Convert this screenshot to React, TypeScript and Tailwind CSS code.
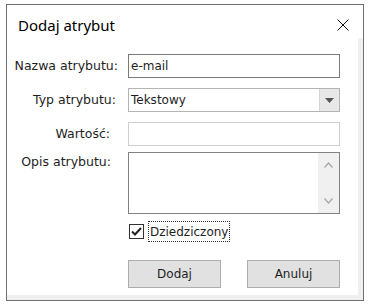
import React from 'react';

const uiFont = { fontFamily: '"DejaVu Sans", Verdana, sans-serif' };

const FormRow = ({ label, pr, children, top = false }: { label: string; pr: string; children: React.ReactNode; top?: boolean }) => (
  <div className={`flex ${top ? 'items-start' : 'items-center'}`}>
    <div className={`w-[111px] shrink-0 text-right text-[12.5px] text-[#1e1e1e] whitespace-nowrap ${pr} ${top ? 'pt-[1px]' : ''}`}>{label}</div>
    <div className="ml-[10px] w-[212px]">{children}</div>
  </div>
);

const Chevron = ({ up }: { up?: boolean }) => (
  <svg width="9" height="6" viewBox="0 0 9 6" className="text-[#a6a6a6]">
    <path d={up ? 'M0.5 5.5 L4.5 1 L8.5 5.5' : 'M0.5 0.5 L4.5 5 L8.5 0.5'} fill="none" stroke="currentColor" strokeWidth="1.2" />
  </svg>
);

export default function App() {
  return (
    <div className="w-[370px] h-[305px] bg-white pl-[6px] pt-[4px]" style={uiFont}>
      <div className="w-[358px] h-[297px] border border-[#6f6f6f] flex flex-col bg-white">
        {/* title bar */}
        <div className="h-[33px] flex items-center justify-between pl-[11px] pr-[14px] shrink-0">
          <span className="text-[15px] text-black mt-[7px]" style={{ fontFamily: '"Noto Sans", "Open Sans", sans-serif' }}>Dodaj atrybut</span>
          <svg width="12" height="12" viewBox="0 0 12 12" className="mt-[7px]">
            <path d="M0.5 0.5 L11.5 11.5 M11.5 0.5 L0.5 11.5" stroke="#111" strokeWidth="1" />
          </svg>
        </div>

        {/* client area */}
        <div className="flex-1 flex flex-col border-r-[5px] border-b-[5px] border-[#f0f0f0]">
          <div className="flex flex-col pt-[16px]">
            <FormRow label="Nazwa atrybutu:" pr="pr-[0px]">
              <div className="h-[24px] border border-[#7a7a7a] px-[2px] flex items-center text-[12px] text-[#1e1e1e]">e-mail</div>
            </FormRow>

            <div className="h-[10px]" />
            <FormRow label="Typ atrybutu:" pr="pr-[2px]">
              <div className="h-[24px] border border-[#b4b4b4] flex">
                <div className="flex-1 px-[2px] flex items-center text-[12px] text-[#1e1e1e]">Tekstowy</div>
                <div className="w-[20px] border-l border-[#d4d4d4] bg-[#e8e8e8] flex items-center justify-center">
                  <svg width="9" height="5" viewBox="0 0 9 5">
                    <path d="M0 0 H9 L4.5 5 Z" fill="#555" />
                  </svg>
                </div>
              </div>
            </FormRow>

            <div className="h-[10px]" />
            <FormRow label="Wartość:" pr="pr-[8px]">
              <div className="h-[24px] border border-[#cfcfcf]" />
            </FormRow>

            <div className="h-[6px]" />
            <FormRow label="Opis atrybutu:" pr="pr-[7px]" top>
              <div className="h-[62px] border border-[#828282] flex">
                <div className="flex-1" />
                <div className="w-[21px] bg-[#f0f0f0] flex flex-col items-center justify-between py-[9px]">
                  <Chevron up />
                  <Chevron />
                </div>
              </div>
            </FormRow>

            {/* checkbox */}
            <div className="flex items-center mt-[7px] ml-[122px]">
              <div className="w-[15px] h-[15px] border border-[#333] bg-white flex items-center justify-center">
                <svg width="11" height="9" viewBox="0 0 11 9">
                  <path d="M1 4.5 L4 7.5 L10 1" fill="none" stroke="#222" strokeWidth="2" />
                </svg>
              </div>
              <div className="ml-[4px] h-[21px] px-[1px] border border-dotted border-[#333] flex items-center text-[12px] text-[#1e1e1e]">
                Dziedziczony
              </div>
            </div>

            {/* buttons */}
            <div className="flex gap-[26px] ml-[121px] mt-[18px]">
              <button className="w-[93px] h-[28px] bg-[#e1e1e1] border border-[#adadad] text-[12px] text-[#1e1e1e]">Dodaj</button>
              <button className="w-[93px] h-[28px] bg-[#e1e1e1] border border-[#adadad] text-[12px] text-[#1e1e1e]">Anuluj</button>
            </div>
          </div>
        </div>
      </div>
    </div>
  );
}
